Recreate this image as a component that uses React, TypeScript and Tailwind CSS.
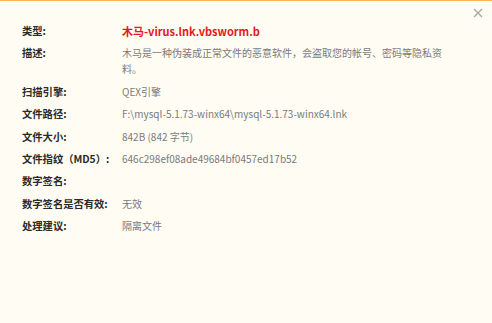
import React from "react";

const rows: { label: string; value: string; red?: boolean }[] = [
  { label: "类型:", value: "木马-virus.lnk.vbsworm.b", red: true },
  { label: "描述:", value: "木马是一种伪装成正常文件的恶意软件，会盗取您的帐号、密码等隐私资料。" },
  { label: "扫描引擎:", value: "QEX引擎" },
  { label: "文件路径:", value: "F:\\mysql-5.1.73-winx64\\mysql-5.1.73-winx64.lnk" },
  { label: "文件大小:", value: "842B (842 字节)" },
  { label: "文件指纹（MD5）:", value: "646c298ef08ade49684bf0457ed17b52" },
  { label: "数字签名:", value: "" },
  { label: "数字签名是否有效:", value: "无效" },
  { label: "处理建议:", value: "隔离文件" },
];

export default function App() {
  return (
    <div
      className="relative w-[492px] h-[323px] bg-[#fffcf4] border-t border-[#f8b551] overflow-hidden"
      style={{ fontFamily: '"Microsoft YaHei", "Noto Sans CJK SC", "Noto Sans", sans-serif' }}
    >
      <button className="absolute right-[9px] top-[7px] w-[10px] h-[10px] flex items-center justify-center">
        <svg width="10" height="10" viewBox="0 0 10 10">
          <path d="M1 1 L9 9 M9 1 L1 9" stroke="#a8a8a8" strokeWidth="1.4" />
        </svg>
      </button>
      <div className="flex flex-col gap-[6.4px] pt-[22px] pl-[22px] text-[10px] leading-[16px]">
        {rows.map((r) => (
          <div key={r.label} className="flex">
            <div className="w-[100px] shrink-0 font-bold text-[#2a2a2a] text-[10.3px]">{r.label}</div>
            <div
              className={
                r.red
                  ? "w-[328px] font-bold text-[#e8161f] text-[11px]"
                  : "w-[328px] text-[#7a7a7a]"
              }
            >
              {r.value}
            </div>
          </div>
        ))}
      </div>
    </div>
  );
}
